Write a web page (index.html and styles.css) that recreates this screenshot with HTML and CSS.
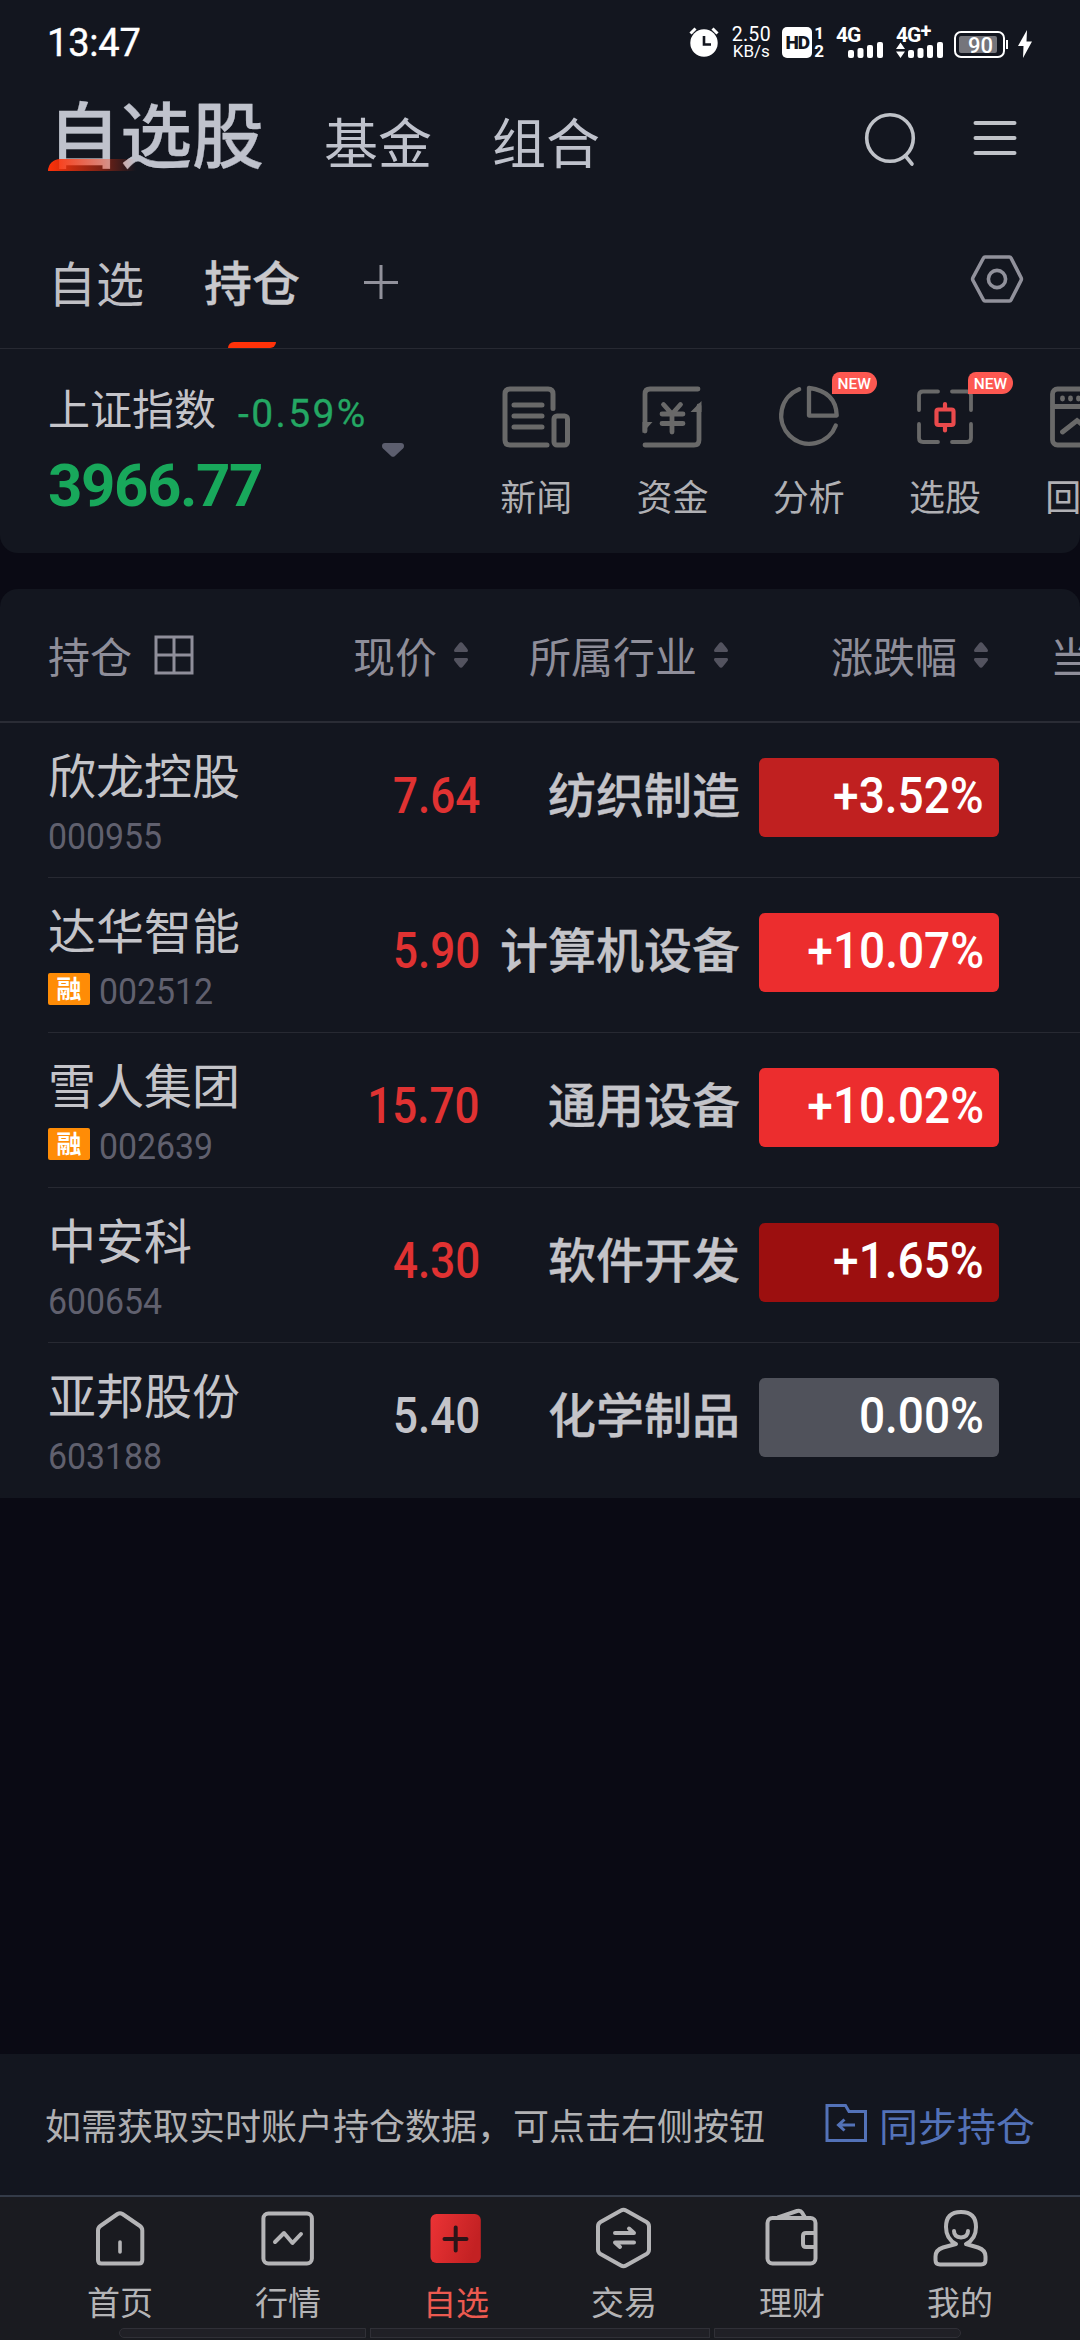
FILE: index.html
```
<!DOCTYPE html>
<html lang="zh-CN">
<head>
    <meta charset="UTF-8">
    <meta name="viewport" content="width=device-width, initial-scale=1.0">
    <title>自选股</title>
    <link rel="stylesheet" href="styles.css">
</head>
<body>
    <div class="app">
        <div class="status-bar">
            <span class="clock">13:47</span>
            <svg class="status-alarm" width="30" height="30" viewBox="0 0 30 30">
                <circle cx="15" cy="16" r="13.7" fill="#fff"/>
                <path d="M1.500 6.500L6.500 1.500M28.500 6.500L23.500 1.500" stroke="#fff" stroke-width="3"/>
                <path d="M15 9v8.500h7" fill="none" stroke="#13161f" stroke-width="2.600"/>
            </svg>
            <div class="net-speed">
                <span class="speed-value">2.50</span>
                <span class="speed-unit">KB/s</span>
            </div>
            <div class="hd">
                <span class="hd-box">HD</span>
                <div class="hd-sims"><span>1</span><span>2</span></div>
            </div>
            <div class="signal">
                <span class="signal-type">4G</span>
                <svg width="48" height="17" viewBox="0 0 48 17" fill="#fff">
                    <rect x="12" y="9" width="6" height="8" rx="2"/>
                    <rect x="21.500" y="7" width="6" height="10" rx="2"/>
                    <rect x="31" y="4" width="6" height="13" rx="2"/>
                    <rect x="41" y="1" width="6" height="16" rx="2"/>
                </svg>
            </div>
            <div class="signal signal-plus">
                <span class="signal-type">4G<sup>+</sup></span>
                <svg width="48" height="17" viewBox="0 0 48 17" fill="#fff">
                    <path d="M0 8L4.500 1.500L9 8zM0 10.500h9L4.500 17z"/>
                    <rect x="12" y="9" width="6" height="8" rx="2"/>
                    <rect x="21.500" y="7" width="6" height="10" rx="2"/>
                    <rect x="31" y="4" width="6" height="13" rx="2"/>
                    <rect x="41" y="1" width="6" height="16" rx="2"/>
                </svg>
            </div>
            <div class="battery"><span class="battery-level">90</span></div>
            <svg class="bolt" width="14" height="28" viewBox="0 0 14 28" fill="#fff">
                <path d="M9 0L0 16h5.500L5 28L14 11.500H8.500z"/>
            </svg>
        </div>

        <div class="title-bar">
            <a class="title active">自选股</a>
            <a class="title">基金</a>
            <a class="title">组合</a>
            <svg class="icon-search" width="60" height="60" viewBox="0 0 60 60" fill="none" stroke="#bfc2c8" stroke-width="3.600" stroke-linecap="round">
                <circle cx="30" cy="30" r="23.300"/>
                <path d="M45.500 48L52 56"/>
            </svg>
            <svg class="icon-menu" width="44" height="36" viewBox="0 0 44 36" stroke="#bfc2c8" stroke-width="4" stroke-linecap="round">
                <path d="M2.500 3h39M2.500 18h39M2.500 33h39"/>
            </svg>
        </div>

        <div class="sub-tabs">
            <a class="sub-tab">自选</a>
            <a class="sub-tab active">持仓</a>
            <svg class="icon-add" width="36" height="36" viewBox="0 0 36 36" stroke="#91919b" stroke-width="3">
                <path d="M1 18.500h34M18 1v34"/>
            </svg>
            <svg class="icon-setting" width="54" height="50" viewBox="0 0 54 50" fill="none" stroke="#91919b" stroke-width="3.600" stroke-linejoin="round">
                <path d="M15 3h24.500q1 0 1.500 1L51 23.500q.8 1.500 0 3L41 46q-.5 1-1.500 1H15q-1 0-1.500-1L3 26.500q-.8-1.500 0-3L13.500 4q.5-1 1.500-1z"/>
                <circle cx="27" cy="25" r="8.600"/>
            </svg>
        </div>

        <div class="index-card">
            <div class="index-info">
                <div class="index-head">
                    <span class="index-name">上证指数</span>
                    <span class="index-change">-0.59%</span>
                </div>
                <div class="index-value">3966.77</div>
            </div>
            <svg class="index-arrow" width="22" height="14" viewBox="0 0 22 14" fill="#5c5e6e">
                <path d="M3 0h16q3 0 3 3q0 1.500-1 2.500L13 13q-2 1.700-4 0L1 5.500Q0 4.500 0 3q0-3 3-3z"/>
            </svg>
            <div class="tools">
                <div class="tool">
                    <svg width="68" height="62" viewBox="0 0 68 62" fill="none" stroke="#696969" stroke-width="5" stroke-linecap="round">
                        <path d="M51 22.500V8q0-5-5-5H8Q3 3 3 8v46q0 5 5 5h37"/>
                        <rect x="52" y="30" width="13.500" height="29" rx="3"/>
                        <path d="M12 19h28M12 30h28M12 41h28"/>
                    </svg>
                    <span>新闻</span>
                </div>
                <div class="tool">
                    <svg width="68" height="62" viewBox="0 0 68 62" fill="none" stroke="#696969" stroke-width="4.800" stroke-linecap="round">
                        <path d="M60 3H12q-5 0-5 5v37M7 59h49q5 0 5-5V20"/>
                        <path d="M4.500 36h10L4.500 47zM63.500 15v11h-11z" fill="#696969" stroke="none"/>
                        <path d="M25.500 18.500L34 28l8.500-9.500M24 28h21M24 37.500h21M34 29v17"/>
                    </svg>
                    <span>资金</span>
                </div>
                <div class="tool">
                    <svg width="68" height="66" viewBox="0 0 68 66" fill="none" stroke="#696969" stroke-width="4.600" stroke-linecap="round">
                        <path d="M23.500 3.500A30 30 0 1 0 62.500 42"/>
                        <path d="M34 2v29.500h29.500Q63 6 34 2z" stroke-linejoin="round"/>
                    </svg>
                    <span>分析</span>
                    <em class="badge">NEW</em>
                </div>
                <div class="tool">
                    <svg width="68" height="62" viewBox="0 0 68 62" fill="none" stroke="#696969" stroke-width="3.800" stroke-linecap="round">
                        <path d="M27 5.500H12Q8 5.500 8 9.500V24M8 38v14q0 4 4 4h15M41 5.500h15q4 0 4 4V24M60 38v14q0 4-4 4H41"/>
                        <g stroke="#ea4a4c" stroke-width="4.200">
                            <rect x="25.500" y="23.500" width="17" height="15.500" rx="2"/>
                            <path d="M34 18v5M34 40v4.500"/>
                        </g>
                    </svg>
                    <span>选股</span>
                    <em class="badge">NEW</em>
                </div>
                <div class="tool">
                    <svg width="68" height="62" viewBox="0 0 68 62" fill="none" stroke="#696969" stroke-width="4.800" stroke-linecap="round">
                        <rect x="5.500" y="3" width="57" height="56" rx="5"/>
                        <path d="M6 20.500h56M15.500 12v1M23.500 12v1M31.500 12v1M15.500 46L30 34.500L44 46"/>
                    </svg>
                    <span>回测</span>
                </div>
            </div>
        </div>

        <div class="holdings">
            <div class="table-head">
                <div class="th-name">持仓
                    <svg width="40" height="40" viewBox="0 0 40 40" fill="none" stroke="#8f8e9a" stroke-width="3">
                        <path d="M2 2h36v36H2zM20 2v36M2 20h36"/>
                    </svg>
                </div>
                <div class="th">现价
                    <svg class="sort" viewBox="0 0 14 26"><path d="M1 10q-2-1 0-3.500L5 1.500q2-2.500 4 0l4 5q2 2.500 0 3.500zM1 16q-2 1 0 3.500l4 5q2 2.500 4 0l4-5q2-2.500 0-3.500z"/></svg>
                </div>
                <div class="th">所属行业
                    <svg class="sort" viewBox="0 0 14 26"><path d="M1 10q-2-1 0-3.500L5 1.500q2-2.500 4 0l4 5q2 2.500 0 3.500zM1 16q-2 1 0 3.500l4 5q2 2.500 4 0l4-5q2-2.500 0-3.500z"/></svg>
                </div>
                <div class="th">涨跌幅
                    <svg class="sort" viewBox="0 0 14 26"><path d="M1 10q-2-1 0-3.500L5 1.500q2-2.500 4 0l4 5q2 2.500 0 3.500zM1 16q-2 1 0 3.500l4 5q2 2.500 4 0l4-5q2-2.500 0-3.500z"/></svg>
                </div>
                <div class="th-more">当</div>
            </div>

            <div class="row">
                <div class="stock">
                    <div class="stock-name">欣龙控股</div>
                    <div class="stock-code"><span class="num">000955</span></div>
                </div>
                <div class="price up"><span class="num">7.64</span></div>
                <div class="industry">纺织制造</div>
                <div class="change mid"><span class="num">+3.52%</span></div>
            </div>
            <div class="row">
                <div class="stock">
                    <div class="stock-name">达华智能</div>
                    <div class="stock-code"><span class="tag">融</span><span class="num">002512</span></div>
                </div>
                <div class="price up"><span class="num">5.90</span></div>
                <div class="industry">计算机设备</div>
                <div class="change high"><span class="num">+10.07%</span></div>
            </div>
            <div class="row">
                <div class="stock">
                    <div class="stock-name">雪人集团</div>
                    <div class="stock-code"><span class="tag">融</span><span class="num">002639</span></div>
                </div>
                <div class="price up"><span class="num">15.70</span></div>
                <div class="industry">通用设备</div>
                <div class="change high"><span class="num">+10.02%</span></div>
            </div>
            <div class="row">
                <div class="stock">
                    <div class="stock-name">中安科</div>
                    <div class="stock-code"><span class="num">600654</span></div>
                </div>
                <div class="price up"><span class="num">4.30</span></div>
                <div class="industry">软件开发</div>
                <div class="change low"><span class="num">+1.65%</span></div>
            </div>
            <div class="row">
                <div class="stock">
                    <div class="stock-name">亚邦股份</div>
                    <div class="stock-code"><span class="num">603188</span></div>
                </div>
                <div class="price"><span class="num">5.40</span></div>
                <div class="industry">化学制品</div>
                <div class="change flat"><span class="num">0.00%</span></div>
            </div>
        </div>

        <div class="sync-bar">
            <span class="sync-tip">如需获取实时账户持仓数据，可点击右侧按钮</span>
            <a class="sync-link">
                <svg width="42" height="38" viewBox="0 0 42 38" fill="none" stroke="#5372b8" stroke-width="3">
                    <path d="M2 1.500h18.500l3.500 6h16.500v29H2z"/>
                    <path d="M30 21H13.500M19.500 15.500L13.500 21l6 5.500"/>
                </svg>
                <span>同步持仓</span>
            </a>
        </div>

        <div class="tab-bar">
            <a class="tab">
                <svg width="60" height="64" viewBox="0 0 60 64" fill="none" stroke="#b4b4b6" stroke-width="4" stroke-linecap="round" stroke-linejoin="round">
                    <path d="M27.500 8q2.500-1.600 5 0L50 20q2.300 1.600 2.300 4.500V54q0 3.500-3.500 3.500H11.500Q8 57.500 8 54V24.500Q8 21.600 10.300 20z"/>
                    <path d="M30 36v10" stroke-width="3.600"/>
                </svg>
                <span>首页</span>
            </a>
            <a class="tab">
                <svg width="60" height="64" viewBox="0 0 60 64" fill="none" stroke="#b4b4b6" stroke-width="4" stroke-linecap="round" stroke-linejoin="round">
                    <rect x="5.400" y="7.500" width="48.500" height="50" rx="5"/>
                    <path d="M17 36L26 27L34.500 37L43 28"/>
                </svg>
                <span>行情</span>
            </a>
            <a class="tab active">
                <svg width="60" height="64" viewBox="0 0 60 64" fill="none">
                    <defs>
                        <linearGradient id="favFill" x1="0" y1="0" x2="1" y2="0.3">
                            <stop offset="0" stop-color="#ec3335"/>
                            <stop offset="1" stop-color="#c32123"/>
                        </linearGradient>
                    </defs>
                    <rect x="4.500" y="8" width="50.300" height="49" rx="6" fill="url(#favFill)"/>
                    <path d="M18.500 33h22M29.700 21.500v23" stroke="#2b1418" stroke-width="4" stroke-linecap="round"/>
                </svg>
                <span>自选</span>
            </a>
            <a class="tab">
                <svg width="60" height="64" viewBox="0 0 60 64" fill="none" stroke="#b4b4b6" stroke-width="4" stroke-linecap="round" stroke-linejoin="round">
                    <path d="M27 4.500q2.500-1.500 5 0L52.500 16q2.500 1.500 2.500 4.500v23q0 3-2.500 4.500L32 59.500q-2.500 1.500-5 0L6.500 48Q4 46.500 4 43.500v-23Q4 17.500 6.500 16z"/>
                    <path d="M21 27h19l-5-4.500M40 36.500H21l5 4.500"/>
                </svg>
                <span>交易</span>
            </a>
            <a class="tab">
                <svg width="60" height="64" viewBox="0 0 60 64" fill="none" stroke="#b4b4b6" stroke-width="4" stroke-linecap="round" stroke-linejoin="round">
                    <rect x="5.500" y="12" width="48" height="45.500" rx="5"/>
                    <path d="M16 11.500L35 5q3.500-1 5 1.500l3 5M53 27H44q-3 0-3 3v8q0 3 3 3h9"/>
                </svg>
                <span>理财</span>
            </a>
            <a class="tab">
                <svg width="60" height="64" viewBox="0 0 60 64" fill="none" stroke="#b4b4b6" stroke-width="4" stroke-linecap="round" stroke-linejoin="round">
                    <path d="M26 38Q16 33 16 21Q16 6 31 6T46 21Q46 33 36 38l12 3.500q7.500 2.500 7.500 9V54q0 4.500-4.500 4.500H10Q5.500 58.500 5.500 54v-3.500Q5.500 44 13 41.500z"/>
                    <path d="M24 25q0 6 7 6.500q7-.5 7-6.500"/>
                </svg>
                <span>我的</span>
            </a>
            <div class="nav-hint"><i></i><i></i><i></i></div>
        </div>
    </div>
</body>
</html>
```
FILE: styles.css
```
* {
    box-sizing: border-box;
}
body {
    margin: 0;
    background: #0a0a14;
    font-family: "Noto Sans CJK SC", sans-serif;
    color: #c4c4c9;
}
svg {
    display: block;
    flex: none;
}
.app {
    width: 1080px;
    height: 2340px;
    display: flex;
    flex-direction: column;
    overflow: hidden;
}

/* status bar */
.status-bar {
    height: 84px;
    padding: 27px 48px 0 47px;
    display: flex;
    background: #13161f;
    color: #fff;
    font-family: Roboto, sans-serif;
}
.clock {
    width: 643px;
    font-size: 38px;
    line-height: 32px;
    font-weight: 400;
    letter-spacing: -0.2px;
    -webkit-text-stroke: 0.4px #fff;
}
.net-speed {
    width: 40px;
    margin-left: 12px;
    display: flex;
    flex-direction: column;
    align-items: center;
}
.speed-value {
    font-size: 19.5px;
    line-height: 15px;
    letter-spacing: 0.3px;
}
.speed-unit {
    margin-top: 1px;
    font-size: 17px;
    line-height: 17px;
}
.hd {
    display: flex;
    margin-left: 11px;
}
.hd-box {
    width: 30px;
    height: 31px;
    border-radius: 5px;
    background: #fff;
    color: #13161f;
    font-size: 19px;
    line-height: 32px;
    font-weight: 900;
    text-align: center;
    letter-spacing: -1px;
}
.hd-sims {
    display: flex;
    flex-direction: column;
    margin-left: 2px;
    font-size: 17px;
    line-height: 13px;
    font-weight: 700;
    gap: 5px;
}
.signal {
    width: 48px;
    height: 31px;
    margin-left: 12px;
}
.signal-type {
    display: block;
    height: 14px;
    font-size: 21px;
    line-height: 16px;
    font-weight: 700;
    letter-spacing: -1px;
    white-space: nowrap;
}
.signal-type sup {
    font-size: 20px;
    line-height: 0;
    vertical-align: 4px;
}
.battery {
    position: relative;
    width: 51px;
    height: 27px;
    margin: 4px 0 0 10px;
    padding: 3px;
    border: 2px solid #fff;
    border-radius: 7px;
}
.battery::after {
    content: "";
    position: absolute;
    right: -5px;
    top: 7px;
    width: 2px;
    height: 9px;
    background: #fff;
}
.battery-level {
    display: block;
    width: 38px;
    height: 17px;
    padding-left: 5px;
    background: #75757b;
    border-radius: 2px;
    font-size: 22px;
    line-height: 19px;
    font-weight: 500;
    text-align: center;
}
.bolt {
    margin: 3px 0 0 13px;
}

/* title bar */
.title-bar {
    height: 132px;
    padding-left: 48px;
    display: flex;
    align-items: flex-start;
    background: #13161f;
}
.title {
    margin-right: 60px;
    font-size: 54px;
    line-height: 114px;
    color: #bfc2cc;
}
.title.active {
    position: relative;
    font-size: 72px;
    line-height: 94px;
    font-weight: 500;
    -webkit-text-stroke: 0.3px #bfc2cc;
}
.title.active::after {
    content: "";
    position: absolute;
    left: 0;
    top: 75px;
    width: 88px;
    height: 12px;
    border-radius: 12px 0 0 0;
    background: linear-gradient(90deg, #ff3209, rgba(255, 50, 9, 0.45) 60%, rgba(255, 50, 9, 0));
}
.icon-search {
    margin: 24px 0 0 200px;
}
.icon-menu {
    margin: 36px 0 0 53px;
}

/* sub tabs */
.sub-tabs {
    height: 133px;
    padding-left: 48px;
    display: flex;
    align-items: center;
    background: #13161f;
    border-bottom: 1px solid #272932;
}
.sub-tab {
    position: relative;
    height: 132px;
    margin-right: 60px;
    font-size: 48px;
    line-height: 130px;
    color: #bfbfc4;
}
.sub-tab.active {
    line-height: 129px;
    font-weight: 500;
    color: #c8c8cc;
    -webkit-text-stroke: 0.3px #c8c8cc;
}
.sub-tab.active::after {
    content: "";
    position: absolute;
    left: 24px;
    bottom: 0;
    width: 48px;
    height: 6px;
    border-radius: 6px 0 6px 0;
    background: #ff3209;
}
.icon-add {
    margin-left: 3px;
}
.icon-setting {
    margin: 0 56px 7px auto;
}

/* index + tools */
.index-card {
    height: 204px;
    padding-left: 48px;
    display: flex;
    background: #13161f;
    border-radius: 0 0 18px 18px;
    overflow: hidden;
}
.index-info {
    flex: none;
    width: 334px;
    padding-top: 30px;
}
.index-head {
    display: flex;
}
.index-name {
    font-size: 42px;
    line-height: 56px;
    white-space: nowrap;
}
.index-change {
    height: 56px;
    margin-left: 22px;
    font-family: Roboto, sans-serif;
    font-size: 39px;
    line-height: 71px;
    letter-spacing: 2.4px;
    color: #24a763;
    -webkit-text-stroke: 0.3px #24a763;
    white-space: nowrap;
}
.index-value {
    margin-top: 17px;
    font-family: Roboto, sans-serif;
    font-size: 60px;
    line-height: 68px;
    font-weight: 700;
    letter-spacing: -1.4px;
    color: #18a85b;
}
.index-arrow {
    margin-top: 94px;
}
.tools {
    display: flex;
    flex: none;
    margin-left: 64px;
}
.tool {
    position: relative;
    flex: none;
    width: 136.3px;
    padding-top: 37px;
    display: flex;
    flex-direction: column;
    align-items: center;
    font-size: 36px;
    color: #b0b0b4;
}
.tool svg {
    height: 62px;
    overflow: visible;
}
.tool span {
    margin-top: 21px;
    line-height: 52px;
}
.badge {
    position: absolute;
    left: 91px;
    top: 23px;
    width: 45px;
    height: 22px;
    border-radius: 8px 11px 11px 0;
    background: #fd5851;
    color: #fff;
    font: 500 15.5px/24px Roboto, sans-serif;
    text-align: center;
}

/* holdings table */
.holdings {
    margin-top: 36px;
    background: #13161f;
    border-radius: 18px 18px 0 0;
    overflow: hidden;
}
.table-head {
    height: 134px;
    padding-left: 48px;
    display: grid;
    grid-template-columns: 252px 168px 260px 260px 92px;
    align-items: center;
    border-bottom: 2px solid #2a2c35;
    font-size: 42px;
    line-height: 60px;
    color: #8f8e9a;
    white-space: nowrap;
}
.th-name {
    display: flex;
    align-items: center;
    gap: 22px;
}
.th {
    display: flex;
    align-items: center;
    justify-content: flex-end;
    gap: 17px;
}
.sort {
    width: 14px;
    height: 26px;
    fill: #53535f;
}
.th-more {
    padding-left: 62px;
    overflow: hidden;
}
.row {
    height: 155px;
    margin-left: 48px;
    display: grid;
    grid-template-columns: 252px 180px 260px 240px;
    border-bottom: 1px solid #272932;
}
.row:last-child {
    border-bottom: none;
}
.stock {
    padding-top: 20px;
}
.stock-name {
    font-size: 48px;
    line-height: 60px;
}
.stock-code {
    margin-top: 12px;
    display: flex;
    font-family: Roboto, sans-serif;
    font-size: 36px;
    line-height: 44px;
    color: #60606e;
}
.stock-code .num {
    display: inline-block;
    transform: scaleX(0.94);
    transform-origin: 0 50%;
}
.tag {
    width: 42px;
    height: 32px;
    margin: 3px 9px 0 0;
    border-radius: 2px;
    background: #ff8c06;
    color: #fff;
    font: 700 25px/29px "Noto Sans CJK SC", sans-serif;
    text-align: center;
}
.price {
    font-family: Roboto, sans-serif;
    font-size: 50px;
    line-height: 147px;
    font-weight: 500;
    text-align: right;
}
.price.up {
    color: #e03232;
}
.price .num {
    display: inline-block;
    transform: scaleX(0.88);
    transform-origin: 100% 50%;
}
.industry {
    font-size: 48px;
    line-height: 138px;
    font-weight: 500;
    text-align: right;
    white-space: nowrap;
    -webkit-text-stroke: 0.3px #c4c4c9;
}
.change {
    width: 240px;
    height: 79px;
    margin: 35px 0 0 19px;
    padding-right: 15px;
    border-radius: 6px;
    font-family: Roboto, sans-serif;
    font-size: 50px;
    line-height: 77px;
    font-weight: 500;
    text-align: right;
    color: #fff;
}
.change .num {
    display: inline-block;
    transform: scaleX(0.92);
    transform-origin: 100% 50%;
}
.change.high {
    background: #ec2d2e;
}
.change.mid {
    background: #c02020;
}
.change.low {
    background: #9c0f0f;
}
.change.flat {
    background: #50525b;
}

/* sync bar */
.sync-bar {
    height: 141px;
    margin-top: auto;
    padding: 0 45px 2px;
    display: flex;
    align-items: center;
    justify-content: space-between;
    background: #13161f;
}
.sync-tip {
    font-size: 36px;
    color: #b1b1b3;
}
.sync-link {
    display: flex;
    align-items: center;
    gap: 12px;
    font-size: 39px;
    color: #5372b8;
}
.sync-link svg {
    margin-bottom: 1px;
}

/* bottom tabs */
.tab-bar {
    position: relative;
    height: 145px;
    padding: 9px 36px 0;
    display: flex;
    background: #1a1b20;
    border-top: 2px solid #343b48;
}
.tab {
    flex: 1;
    display: flex;
    flex-direction: column;
    align-items: center;
    font-size: 33px;
    color: #b4b4b6;
}
.tab span {
    margin-top: 8px;
    line-height: 46px;
}
.tab.active {
    color: #ec5a50;
}
.nav-hint {
    position: absolute;
    left: 119px;
    bottom: 2px;
    width: 842px;
    height: 10px;
    display: flex;
    gap: 4px;
}
.nav-hint i {
    flex: 247;
    background: #202026;
    border: 1px solid #303037;
}
.nav-hint i:nth-child(2) {
    flex: 340;
}
.nav-hint i:first-child {
    border-radius: 5px 0 0 5px;
}
.nav-hint i:last-child {
    border-radius: 0 5px 5px 0;
}
```
